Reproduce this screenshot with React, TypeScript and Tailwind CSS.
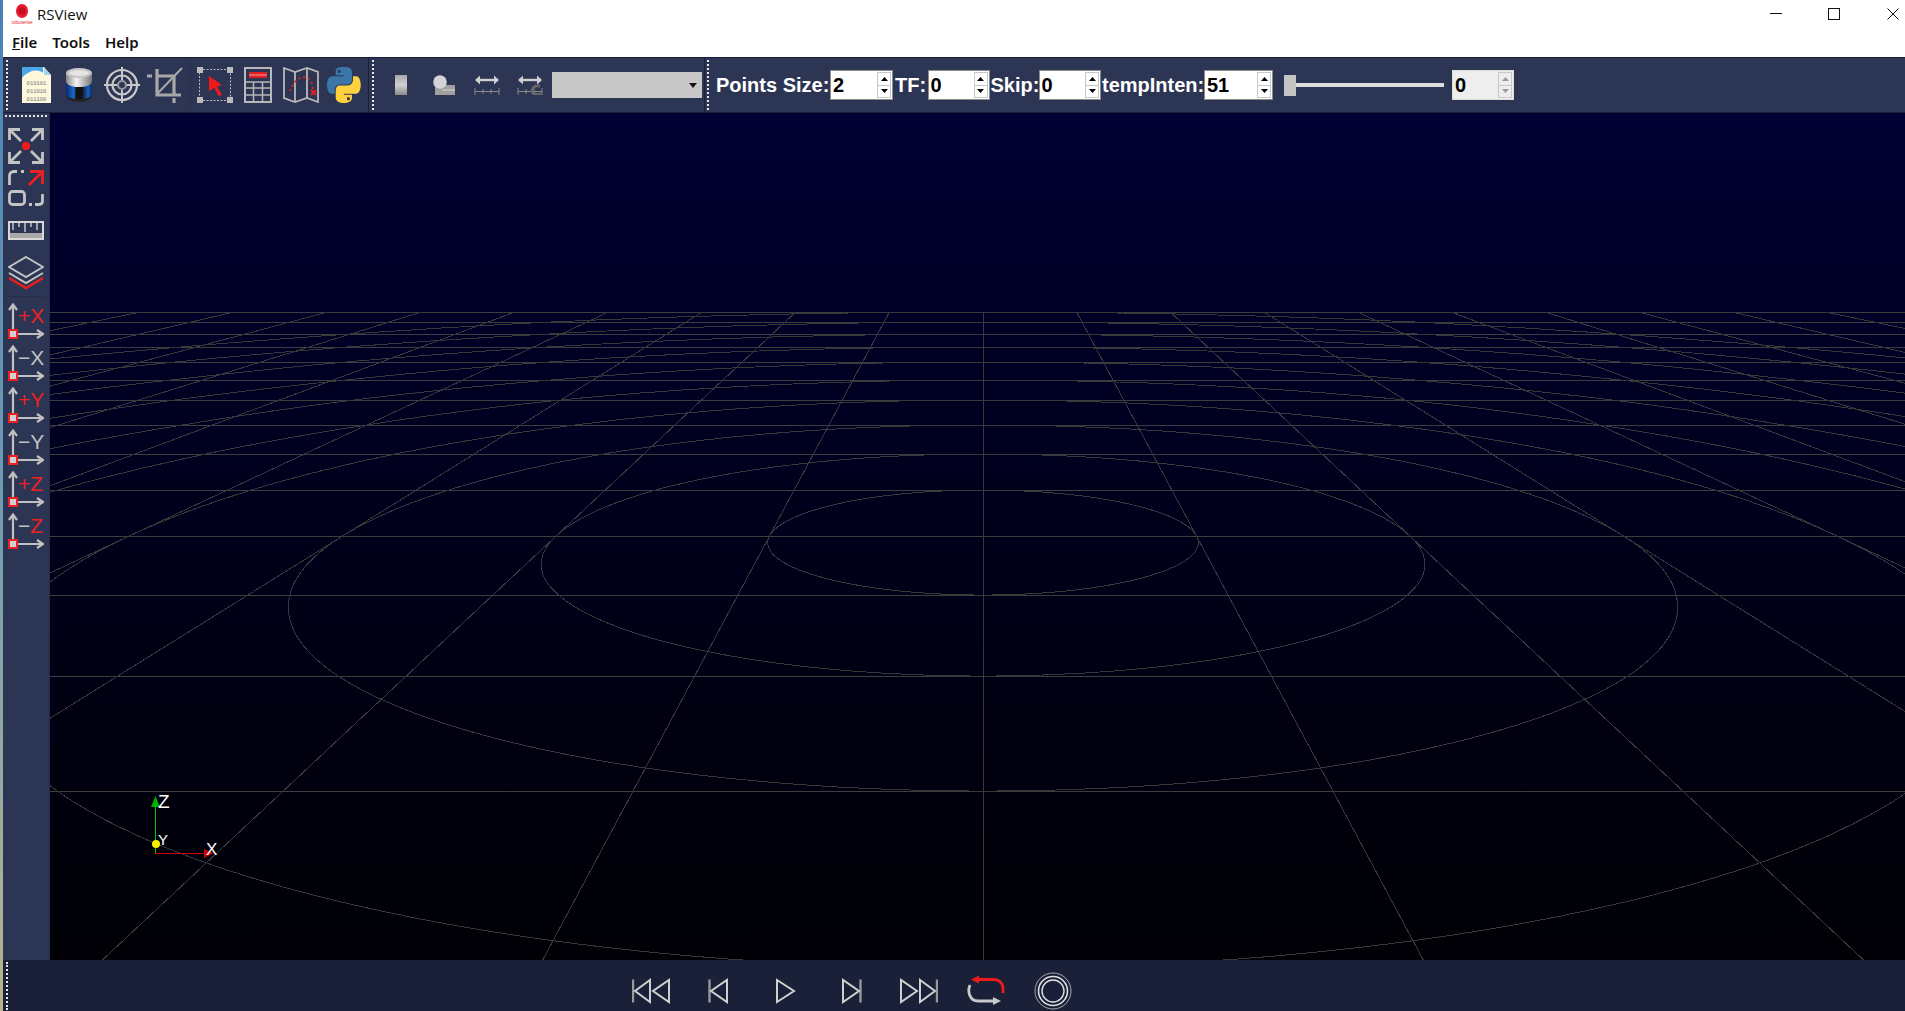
import React from "react";

const hY = 137, kk = 0.535, cx = 983;
const OX = 50, OY = 113;
const ROWS = [791, 676, 595, 536, 490, 454, 425, 400, 380, 362, 347, 334, 322, 312];
const W = ROWS.map((y) => 1 / (y - hY));
function wOf(i: number): number {
  if (i <= 0) return W[0] + (W[1] - W[0]) * i;
  if (i >= 13) return W[13];
  const a = Math.floor(i);
  return W[a] + (W[a + 1] - W[a]) * (i - a);
}

function ringPath(r: number): string {
  let d = "", pen = false;
  for (let t = 0; t <= 1440; t++) {
    const a = (t / 1440) * Math.PI * 2;
    const X = r * Math.cos(a), Z = 3 + r * Math.sin(a);
    const w = wOf(Z);
    if (w < 0.00012) { pen = false; continue; }
    const y = hY + 1 / w - OY, x = cx + (X * kk) / w - OX;
    if (x < -3000 || x > 5000 || y > 1500) { pen = false; continue; }
    d += (pen ? "L" : "M") + x.toFixed(1) + " " + y.toFixed(1);
    pen = true;
  }
  return d;
}

function Grid() {
  const rows = ROWS.map((y) => y - OY + 0.5);
  const ks = Array.from({ length: 21 }, (_, i) => i - 10);
  const rs = Array.from({ length: 10 }, (_, i) => i + 1);
  const top = 312 - OY, bot = 960 - OY;
  return (
    <svg width="1855" height="847" viewBox="0 0 1855 847" className="block absolute left-0 top-0" fill="none">
      <g strokeWidth="1" shapeRendering="crispEdges">
        <g stroke="#3e3e3e">
          {rows.map((y) => <line key={y} x1="0" x2="1855" y1={y} y2={y} />)}
        </g>
        <g stroke="#383838">
          {ks.map((k) => (
            <line key={k} x1={cx - OX + k * kk * (312 - hY)} y1={top} x2={cx - OX + k * kk * (960 - hY)} y2={bot} />
          ))}
          {rs.map((r) => <path key={r} d={ringPath(r)} />)}
        </g>
      </g>
    </svg>
  );
}

function Gizmo() {
  return (
    <svg width="110" height="80" viewBox="130 780 110 80" className="block absolute left-[80px] top-[667px]" fill="none">
      <line x1="155.5" y1="853" x2="155.5" y2="806" stroke="#00d000" strokeWidth="1" />
      <polygon points="155.5,796 151,807 160,807" fill="#00b000" />
      <line x1="155" y1="853.5" x2="205" y2="853.5" stroke="#d00000" strokeWidth="1" />
      <polygon points="214,853 204,849 204,858" fill="#c80000" />
      <circle cx="156" cy="844" r="4" fill="#f0f000" />
      <text x="158" y="808" fill="#fff" fontSize="19" fontFamily="'Liberation Sans',sans-serif">Z</text>
      <text x="158" y="845" fill="#fff" fontSize="15" fontFamily="'Liberation Sans',sans-serif">Y</text>
      <text x="206" y="855" fill="#fff" fontSize="17" fontFamily="'Liberation Sans',sans-serif">X</text>
    </svg>
  );
}

const G = "#c8c8c8";

function Doc() {
  return (
    <svg width="36" height="38" viewBox="0 0 36 38" className="block">
      <path d="M4 1H26L33 9V37H4Z" fill="#fdf8dc" />
      <path d="M4 12V1H25V7C21 4 16 4 12 6C8 8 6 9 4 12Z" fill="#4aa8ea" />
      <path d="M26 1L33 9H26Z" fill="#a8d0ee" />
      <text x="18.500" y="19" textAnchor="middle" fontSize="5.500" fill="#777" fontFamily="'Liberation Mono',monospace">010101</text>
      <text x="18.500" y="27" textAnchor="middle" fontSize="5.500" fill="#777" fontFamily="'Liberation Mono',monospace">011010</text>
      <text x="18.500" y="35" textAnchor="middle" fontSize="5.500" fill="#777" fontFamily="'Liberation Mono',monospace">011100</text>
    </svg>
  );
}
function Db() {
  return (
    <svg width="36" height="36" viewBox="0 0 36 36" className="block">
      <defs>
        <linearGradient id="dbb" x1="0" x2="1" y1="0" y2="0">
          <stop offset="0" stopColor="#0a2a70" /><stop offset="0.3" stopColor="#1a6ad0" /><stop offset="0.4" stopColor="#111" /><stop offset="0.6" stopColor="#111" /><stop offset="0.85" stopColor="#1a60c0" /><stop offset="1" stopColor="#0a2a70" />
        </linearGradient>
        <linearGradient id="dbg" x1="0" x2="1" y1="0" y2="0">
          <stop offset="0" stopColor="#888" /><stop offset="0.4" stopColor="#f4f4f4" /><stop offset="1" stopColor="#777" />
        </linearGradient>
      </defs>
      <path d="M5 6V28C5 32 11 35 18 35C25 35 31 32 31 28V6Z" fill="#222" />
      <path d="M5 6V15C5 19 11 21 18 21C25 21 31 19 31 15V6Z" fill="url(#dbg)" />
      <path d="M5 14C5 18 11 20 18 20C25 20 31 18 31 14V27C31 30 25 32 18 32C11 32 5 30 5 27Z" fill="url(#dbb)" />
      <ellipse cx="18" cy="6" rx="13" ry="5" fill="#c4c4c4" />
      <ellipse cx="18" cy="6" rx="10" ry="3" fill="#e4e4e4" />
    </svg>
  );
}
function Target() {
  return (
    <svg width="36" height="36" viewBox="0 0 36 36" fill="none" stroke={G} className="block">
      <circle cx="18" cy="18" r="15" strokeWidth="2.200" />
      <circle cx="18" cy="18" r="9.500" strokeWidth="2.200" />
      <circle cx="18" cy="18" r="4" strokeWidth="2.200" stroke="#999" />
      <path d="M18 0V13M18 23V36M0 18H13M23 18H36" strokeWidth="2" />
    </svg>
  );
}
function Crop() {
  return (
    <svg width="36" height="36" viewBox="0 0 36 36" fill="none" className="block">
      <path d="M0 9H5M10 2V28H34M27 31V36" strokeWidth="3.200" stroke="#a8a8a8" />
      <path d="M10 9H27V28" strokeWidth="3.200" stroke="#a8a8a8" />
      <path d="M10 27L35 1" strokeWidth="2" stroke="#a8a8a8" />
    </svg>
  );
}
function SelectIcon() {
  return (
    <svg width="36" height="36" viewBox="0 0 36 36" fill="none" className="block">
      <rect x="2.500" y="2.500" width="31" height="31" stroke="#bbb" strokeDasharray="2 1.500" />
      <rect x="0" y="0" width="6" height="6" fill="#bbb" /><rect x="30" y="0" width="6" height="6" fill="#bbb" />
      <rect x="0" y="30" width="6" height="6" fill="#bbb" /><rect x="30" y="30" width="6" height="6" fill="#bbb" />
      <path d="M12 9L25 18L20 19.500L25 28L21.500 29L17.500 21L12 24Z" fill="#f01818" />
    </svg>
  );
}
function Calc() {
  return (
    <svg width="28" height="36" viewBox="0 0 28 36" fill="none" stroke="#b8b8b8" className="block">
      <rect x="1" y="1" width="26" height="34" strokeWidth="2" />
      <rect x="5" y="5" width="18" height="6" fill="#e02020" stroke="none" />
      <rect x="5" y="7.500" width="18" height="1" fill="#f4a0a0" stroke="none" />
      <path d="M1 15H27M1 21H27M1 28H27M9.500 15V35M18.500 15V35" strokeWidth="1.500" />
    </svg>
  );
}
function MapIcon() {
  return (
    <svg width="36" height="36" viewBox="0 0 36 36" fill="none" className="block">
      <path d="M1 1L12 5L24 1L35 5V35L24 31L12 35L1 31Z" stroke="#b8b8b8" strokeWidth="1.800" />
      <path d="M12 5V35M24 1V31" stroke="#b8b8b8" strokeWidth="1.800" />
      <path d="M7 24C10 16 15 11 20 10C25 10 29 14 30 22" stroke="#e02020" strokeWidth="2" strokeDasharray="2 3" />
      <path d="M28 23L33 28M33 23L28 28" stroke="#e02020" strokeWidth="2" />
    </svg>
  );
}
function Python() {
  return (
    <svg width="34" height="36" viewBox="0 0 112 112" preserveAspectRatio="none" className="block">
      <path fill="#3a76a8" fillRule="evenodd" d="M54.900 0C50.300 0 46 .4 42.100 1.100 30.800 3.100 28.700 7.300 28.700 15V25.300H55.500V28.700H18.600C10.800 28.700 4 33.300 1.900 42.300-.6 52.500-.7 58.800 1.900 69.500 3.800 77.400 8.300 83.100 16.100 83.100H25.400V70.800C25.400 62 33 54.200 42.100 54.200H68.900C76.300 54.200 82.300 48 82.300 40.600V15C82.300 7.800 76.200 2.300 68.900 1.100 64.300 .3 59.500 0 54.900 0ZM40.400 8.200C43.200 8.200 45.400 10.500 45.400 13.300 45.400 16.200 43.200 18.400 40.400 18.400 37.600 18.400 35.400 16.200 35.400 13.300 35.400 10.500 37.600 8.200 40.400 8.200Z" />
      <path fill="#fdd23e" fillRule="evenodd" d="M85.600 28.700V40.600C85.600 49.800 77.800 57.600 68.900 57.600H42.100C34.800 57.600 28.700 63.800 28.700 71.200V96.700C28.700 104 35 108.300 42.100 110.300 50.600 112.800 58.700 113.300 68.900 110.300 75.600 108.400 82.300 104.500 82.300 96.700V86.500H55.500V83.100H95.700C103.500 83.100 106.400 77.700 109.100 69.500 111.900 61.100 111.800 53 109.100 42.300 107.200 34.500 103.500 28.700 95.700 28.700ZM70.600 93.300C73.400 93.300 75.700 95.600 75.700 98.400 75.700 101.200 73.400 103.500 70.600 103.500 67.900 103.500 65.600 101.200 65.600 98.400 65.600 95.600 67.900 93.300 70.600 93.300Z" />
    </svg>
  );
}
function Bar() {
  return (
    <svg width="12" height="20" viewBox="0 0 12 20" className="block">
      <defs><linearGradient id="bar" x1="0" x2="0" y1="0" y2="1"><stop offset="0" stopColor="#a8a8a8" /><stop offset="0.5" stopColor="#d0d0d0" /><stop offset="1" stopColor="#8a8a8a" /></linearGradient></defs>
      <rect width="12" height="20" fill="url(#bar)" />
    </svg>
  );
}
function Sphere() {
  return (
    <svg width="22" height="20" viewBox="0 0 22 20" className="block">
      <rect x="2" y="10" width="20" height="10" fill="#a0a0a0" />
      <path d="M9 15H22" stroke="#d8d8d8" strokeWidth="1" />
      <circle cx="7" cy="7" r="6.800" fill="#d4d4d4" />
    </svg>
  );
}
function Measure({ c }: { c?: boolean }) {
  return (
    <svg width="26" height="20" viewBox="0 0 26 20" fill="none" className="block">
      <path d="M2 5H24" stroke="#d0d0d0" strokeWidth="2.400" />
      <path d="M6 .5L1 5L6 9.500ZM20 .5L25 5L20 9.500Z" fill="#d0d0d0" />
      <path d="M1 13V20M25 13V20M1 16.500H25M9 14V19M17 14V19" stroke="#888" />
      {c && <path d="M23 11C17 10 15 14 15 16C15 19 19 20 24 19" stroke="#666" strokeWidth="3" />}
    </svg>
  );
}

function Spin({ v, w, disabled }: { v: string; w: string; disabled?: boolean }) {
  const box = disabled ? "bg-[#eeeeee] border-[#dddddd]" : "bg-white border-[#8c8c8c]";
  return (
    <div className={`flex h-[30px] shrink-0 border ${box} ${w}`}>
      <div className="flex-1 pl-[2px] leading-[28px] text-[20px] font-bold text-black">{v}</div>
      <div className="flex w-[14px] flex-col my-[1px] mr-[1px] border border-[#c8c8c8]">
        <div className={`flex flex-1 items-center justify-center ${disabled ? "text-[#999999]" : "text-black"}`}>
          <svg width="7" height="4" viewBox="0 0 7 4"><path d="M3.500 0L7 4H0Z" fill="currentColor" /></svg>
        </div>
        <div className="h-px bg-[#c8c8c8]" />
        <div className={`flex flex-1 items-center justify-center ${disabled ? "text-[#999999]" : "text-black"}`}>
          <svg width="7" height="4" viewBox="0 0 7 4"><path d="M0 0H7L3.500 4Z" fill="currentColor" /></svg>
        </div>
      </div>
    </div>
  );
}

function Cell({ children }: { children: React.ReactNode }) {
  return <div className="flex w-[43px] shrink-0 items-center justify-center">{children}</div>;
}
function VHandle() {
  return <div className="h-[50px] w-[2px] shrink-0 border-l-2 border-dotted border-[#e8e8e8]" />;
}

function Expand() {
  return (
    <svg width="36" height="36" viewBox="0 0 36 36" fill="none" stroke="#c4c4c4" strokeWidth="2.800" className="block">
      <path d="M1.500 12V1.500H12M1.500 1.500L13 13M24 1.500H34.500V12M34.500 1.500L23 13M1.500 24V34.500H12M1.500 34.500L13 23M24 34.500H34.500V24M34.500 34.500L23 23" />
      <circle cx="18" cy="18" r="4.200" fill="#f01c1c" stroke="none" />
    </svg>
  );
}
function Frame() {
  return (
    <svg width="36" height="36" viewBox="0 0 36 36" fill="none" strokeWidth="2.800" className="block">
      <path d="M1.500 15V6C1.500 3 3 1.500 6 1.500H9M13 1.500H16" stroke="#c4c4c4" />
      <path d="M21 15L34 2M22 1.500H34.500V14" stroke="#f02020" />
      <rect x="1.500" y="21.500" width="15" height="13" rx="3" stroke="#c4c4c4" />
      <path d="M21 34.500H24M27 34.500H31C33.500 34.500 34.500 33 34.500 31V24" stroke="#c4c4c4" />
    </svg>
  );
}
function Ruler() {
  return (
    <svg width="36" height="19" viewBox="0 0 36 19" fill="none" className="block">
      <rect x="0" y="12" width="36" height="7" fill="#a8a8a8" />
      <rect x="1" y="1" width="34" height="17" stroke="#d8d8d8" strokeWidth="2" />
      <path d="M5 2V9M11 2V6M17 2V11M23 2V6M29 2V9" stroke="#bdbdbd" strokeWidth="1.600" />
    </svg>
  );
}
function Layers() {
  return (
    <svg width="36" height="34" viewBox="0 0 36 34" fill="none" strokeWidth="2" className="block">
      <path d="M18 1L35 11L18 21L1 11Z" stroke="#c4c4c4" />
      <path d="M1 17L18 27L35 17" stroke="#c4c4c4" />
      <path d="M1 22L18 32L35 22" stroke="#f01c1c" strokeWidth="2.400" />
    </svg>
  );
}
function Axis({ sign, letter, signRed, letterRed }: { sign: string; letter: string; signRed: boolean; letterRed: boolean }) {
  const g = "#c0c0c0", r = "#f02020";
  return (
    <svg width="36" height="42" viewBox="0 0 36 42" fill="none" className="block">
      <path d="M5 26V2M1 7L5 1.500L9 7" stroke={g} strokeWidth="2.200" />
      <path d="M9 31H34M29 27L35 31L29 35" stroke={g} strokeWidth="2.200" />
      <rect x="1" y="27" width="8" height="8" fill="#d0d0d0" stroke={r} strokeWidth="2" />
      <text x="10" y="20" fontSize="21" fontFamily="'Liberation Sans',sans-serif">
        <tspan fill={signRed ? r : g}>{sign}</tspan>
        <tspan fill={letterRed ? r : g}>{letter}</tspan>
      </text>
    </svg>
  );
}

function Rewind() {
  return (
    <svg width="38" height="38" viewBox="0 0 38 38" fill="none" stroke="#cfcfcf" strokeWidth="2" className="block">
      <path d="M1 7.500V30.500" stroke="#999" strokeWidth="2.400" />
      <path d="M18 8V30L3 19ZM37 8V30L21 19Z" />
    </svg>
  );
}
function StepBack() {
  return (
    <svg width="38" height="38" viewBox="0 0 38 38" fill="none" stroke="#cfcfcf" strokeWidth="2" className="block">
      <path d="M10.500 7.500V30.500" stroke="#999" strokeWidth="2.400" />
      <path d="M28 8V30L12 19Z" />
    </svg>
  );
}
function Play() {
  return (
    <svg width="38" height="38" viewBox="0 0 38 38" fill="none" stroke="#cfcfcf" strokeWidth="2" className="block">
      <path d="M11 8V30L28 19Z" />
    </svg>
  );
}
function StepFwd() {
  return (
    <svg width="38" height="38" viewBox="0 0 38 38" fill="none" stroke="#cfcfcf" strokeWidth="2" className="block">
      <path d="M27.500 7.500V30.500" stroke="#999" strokeWidth="2.400" />
      <path d="M10 8V30L26 19Z" />
    </svg>
  );
}
function Ffwd() {
  return (
    <svg width="38" height="38" viewBox="0 0 38 38" fill="none" stroke="#cfcfcf" strokeWidth="2" className="block">
      <path d="M37 7.500V30.500" stroke="#999" strokeWidth="2.400" />
      <path d="M1 8V30L17 19ZM20 8V30L35 19Z" />
    </svg>
  );
}
function Repeat() {
  return (
    <svg width="38" height="38" viewBox="0 0 38 38" fill="none" className="block">
      <path d="M36 21V17C36 11 32 7.500 27 7.500H10" stroke="#f01c1c" strokeWidth="2.800" />
      <path d="M4 7.500L12 3.500V11.500Z" fill="#f01c1c" />
      <path d="M3 13C0 20 3 29 11 29H28" stroke="#c8c8c8" strokeWidth="2.800" />
      <path d="M34 29L26 25V33Z" fill="#c8c8c8" />
    </svg>
  );
}
function Record() {
  return (
    <svg width="38" height="38" viewBox="0 0 38 38" fill="none" className="block">
      <circle cx="19" cy="19" r="18" stroke="#a8a8a8" strokeWidth="1" />
      <circle cx="19" cy="19" r="14.500" stroke="#e0e0e0" strokeWidth="1.600" />
      <circle cx="19" cy="19" r="11" stroke="#e0e0e0" strokeWidth="1.400" />
    </svg>
  );
}

const Logo = () => (
  <svg width="24" height="24" viewBox="0 0 24 24" className="block">
    <ellipse cx="12" cy="9" rx="6" ry="7" fill="#e81c30" />
    <circle cx="12" cy="9" r="3.800" fill="#c41020" />
    <text x="12" y="22" textAnchor="middle" fontSize="4.500" fill="#e81c30" fontFamily="'Liberation Sans',sans-serif">robosense</text>
  </svg>
);

export default function App() {
  return (
    <div className="flex h-[1011px] w-[1905px] overflow-hidden font-['Liberation_Sans',sans-serif]">
      <div className="w-[3px] shrink-0 bg-linear-to-b from-[#4a80b8] via-[#6f9cb0] to-[#b8b48c]" />
      <div className="flex min-w-0 flex-1 flex-col">
        <div className="flex h-[28px] shrink-0 items-center bg-white pl-[7px]">
          <Logo />
          <span className="ml-[3px] font-['Open_Sans',sans-serif] text-[15px] text-[#111111]">RSView</span>
          <div className="ml-auto flex items-center">
            <svg width="12" height="12" viewBox="0 0 12 12" className="mr-[46px]"><path d="M0 5.500H12" stroke="#111" /></svg>
            <svg width="12" height="12" viewBox="0 0 12 12" className="mr-[47px]" fill="none"><rect x=".5" y=".5" width="11" height="11" stroke="#111" /></svg>
            <svg width="12" height="12" viewBox="0 0 12 12" className="mr-[6px]" fill="none"><path d="M.5 .5L11.500 11.500M11.500 .5L.5 11.500" stroke="#111" /></svg>
          </div>
        </div>
        <div className="flex h-[29px] shrink-0 items-center gap-[15px] bg-white pl-[9px] font-['Noto_Sans',sans-serif] text-[15px] font-semibold text-[#111111]">
          <span><span className="underline">F</span>ile</span>
          <span>Tools</span>
          <span>Help</span>
        </div>
        <div className="flex h-[56px] shrink-0 items-center border-y border-[#1a2038] bg-[#2c3554]">
          <div className="ml-[3px]"><VHandle /></div>
          <div className="ml-[6.500px] flex items-center">
            <Cell><Doc /></Cell>
            <Cell><Db /></Cell>
            <Cell><Target /></Cell>
            <Cell><Crop /></Cell>
            <div className="h-[44px] w-[7px] shrink-0 border-l border-[#252d49] ml-[3px] mr-[-3px]" />
            <Cell><SelectIcon /></Cell>
            <Cell><Calc /></Cell>
            <Cell><MapIcon /></Cell>
            <Cell><Python /></Cell>
          </div>
          <div className="ml-[2.500px] h-full w-px shrink-0 bg-[#1a2038]" />
          <div className="ml-[3px]"><VHandle /></div>
          <div className="ml-[5.500px] flex items-center">
            <Cell><Bar /></Cell>
            <Cell><Sphere /></Cell>
            <Cell><Measure /></Cell>
            <Cell><Measure c /></Cell>
          </div>
          <div className="relative ml-[0.500px] h-[26px] w-[150px] shrink-0 bg-[#c8c8c8]">
            <svg width="8" height="5" viewBox="0 0 8 5" className="absolute right-[5px] top-[11px]"><path d="M0 0H8L4 5Z" fill="#111" /></svg>
          </div>
          <div className="ml-[2px] h-full w-px shrink-0 bg-[#1a2038]" />
          <div className="ml-[2px]"><VHandle /></div>
          <div className="ml-[7px] flex items-center text-[20px] font-bold text-white">
            <span className="w-[114px] shrink-0">Points Size:</span>
            <Spin v="2" w="w-[63px]" />
            <span className="ml-[2px] w-[32.500px] shrink-0">TF:</span>
            <Spin v="0" w="w-[62px]" />
            <span className="ml-[1px] w-[48px] shrink-0">Skip:</span>
            <Spin v="0" w="w-[62.500px]" />
            <span className="ml-[1px] w-[102px] shrink-0">tempInten:</span>
            <Spin v="51" w="w-[69px]" />
            <div className="ml-[11px] h-[21px] w-[12px] shrink-0 bg-[#c4c4c4]" />
            <div className="h-[4px] w-[148px] shrink-0 bg-[#dddddd]" />
            <div className="ml-[8px]"><Spin v="0" w="w-[62px]" disabled /></div>
          </div>
        </div>
        <div className="flex min-h-0 flex-1">
          <div className="flex w-[47px] shrink-0 flex-col items-center border-r border-[#252d49] bg-[#2c3554]">
            <div className="mt-[2px] h-[2px] w-[42px] shrink-0 border-t-2 border-dotted border-[#e8e8e8]" />
            <div className="mt-[11px]"><Expand /></div>
            <div className="mt-[6px]"><Frame /></div>
            <div className="mt-[15px]"><Ruler /></div>
            <div className="mt-[16px]"><Layers /></div>
            <div className="mt-[6px] h-px w-[36px] shrink-0 bg-[#252d49]" />
            <div className="mt-[6px]"><Axis sign="+" letter="X" signRed letterRed /></div>
            <Axis sign="−" letter="X" signRed={false} letterRed={false} />
            <Axis sign="+" letter="Y" signRed letterRed />
            <Axis sign="−" letter="Y" signRed={false} letterRed={false} />
            <Axis sign="+" letter="Z" signRed letterRed />
            <Axis sign="−" letter="Z" signRed={false} letterRed />
          </div>
          <div className="relative min-w-0 flex-1 overflow-hidden bg-linear-to-b from-[#000033] to-[#000006]">
            <Grid />
            <Gizmo />
          </div>
        </div>
        <div className="flex h-[51px] shrink-0 bg-[#1a2038]">
          <div className="ml-[3px] mt-[2px] h-[48px] w-[2px] shrink-0 border-l-2 border-dotted border-[#e8e8e8]" />
          <div className="ml-[624px] mt-[12px] flex gap-[29px]">
            <Rewind /><StepBack /><Play /><StepFwd /><Ffwd /><Repeat /><Record />
          </div>
        </div>
      </div>
    </div>
  );
}
